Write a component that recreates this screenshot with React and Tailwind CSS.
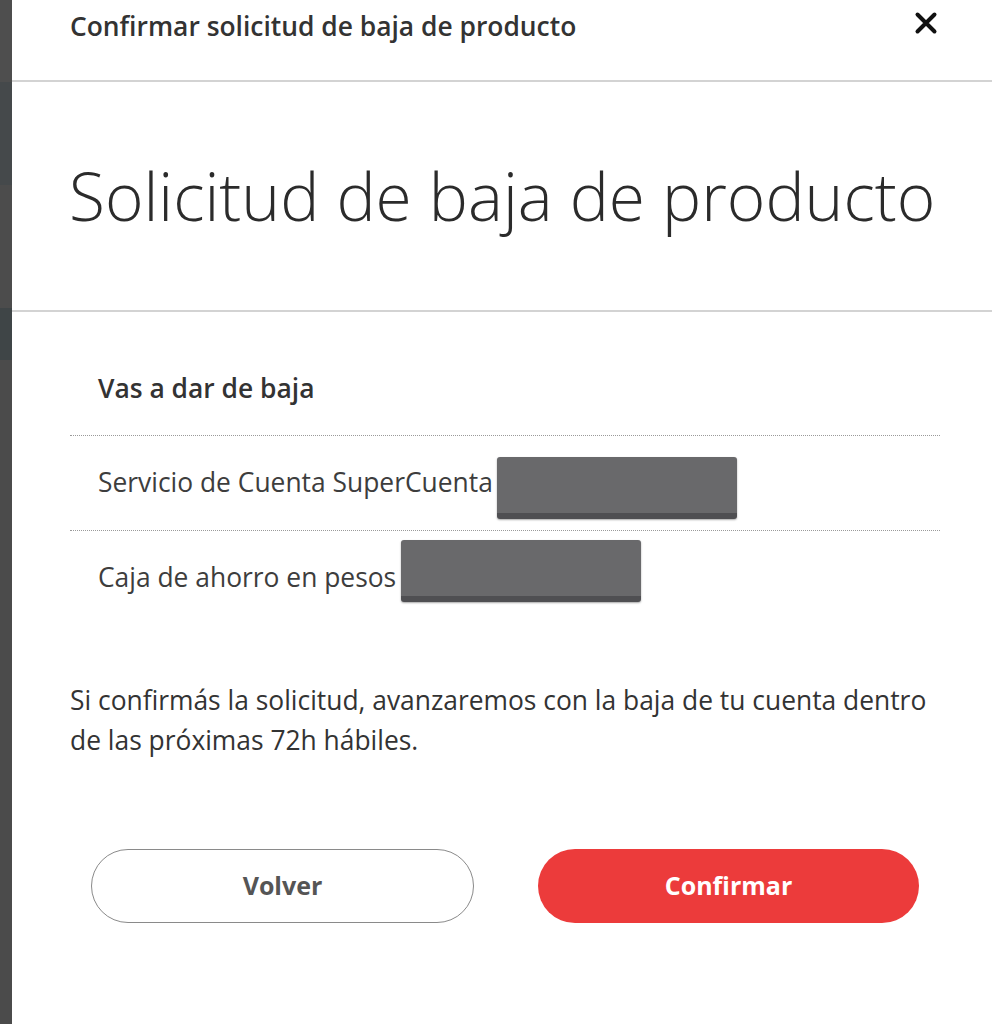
function CloseIcon() {
    return (
        <svg width="24" height="24" viewBox="0 0 24 24" fill="none">
            <path d="M3.5 3.5L20.5 20.5M20.5 3.5L3.5 20.5" stroke="#111" strokeWidth="4" strokeLinecap="round" />
        </svg>
    );
}

function Redacted({ className }) {
    return (
        <div className={`w-[240px] h-[62px] shrink-0 rounded-[3px] bg-[#69696b] border-b-[6px] border-[#4f4f52] shadow-[0_1px_2px_rgba(0,0,0,0.35)] ${className}`}></div>
    );
}

function App() {
    return (
        <div className="flex min-h-[1024px] w-[992px] bg-white font-['Open_Sans',sans-serif]">
            {/* dark page behind the modal */}
            <div className="w-[12px] shrink-0 flex flex-col">
                <div className="h-[82px] bg-[#4e4e4e]"></div>
                <div className="h-[103px] bg-[#45494b]"></div>
                <div className="h-[123px] bg-[#4c4c4c]"></div>
                <div className="h-[52px] bg-[#3f4547]"></div>
                <div className="flex-1 bg-[#4b4b4b]"></div>
            </div>

            <div className="flex-1 flex flex-col bg-white">
                <div className="h-[82px] flex items-start justify-between pl-[58px] pr-[54px] pt-[9px] border-b-2 border-[#d3d3d3]">
                    <div className="text-[26.4px] leading-[34px] font-semibold text-[#333]">
                        Confirmar solicitud de baja de producto
                    </div>
                    <button className="mt-[2px]">
                        <CloseIcon />
                    </button>
                </div>

                <div className="h-[230px] flex items-center pl-[57px] border-b-2 border-[#d3d3d3]">
                    <h1 className="text-[65.8px] font-light text-[#2b2b2b]">
                        Solicitud de baja de producto
                    </h1>
                </div>

                <div className="pl-[58px] pr-[52px] pt-[30px]">
                    <div className="h-[94px] flex items-center pl-[28px] border-b border-dotted border-[#9a9a9a]">
                        <span className="text-[26.4px] font-semibold text-[#333]">Vas a dar de baja</span>
                    </div>
                    <div className="h-[95px] flex items-center pl-[28px] border-b border-dotted border-[#9a9a9a]">
                        <span className="text-[26.4px] text-[#3d3d3d]">Servicio de Cuenta SuperCuenta</span>
                        <Redacted className="ml-[4px] mt-[10px]" />
                    </div>
                    <div className="h-[94px] flex items-center pl-[28px]">
                        <span className="text-[26.4px] text-[#3d3d3d]">Caja de ahorro en pesos</span>
                        <Redacted className="ml-[5px] -mt-[14px]" />
                    </div>

                    <p className="mt-[55px] text-[26.4px] leading-[40px] text-[#333]">
                        Si confirmás la solicitud, avanzaremos con la baja de tu cuenta dentro de las próximas 72h hábiles.
                    </p>

                    <div className="mt-[89px] flex gap-[64px] px-[21px]">
                        <button className="flex-1 h-[74px] rounded-full border border-[#8a8a8a] bg-white text-[25px] font-bold text-[#555]">
                            Volver
                        </button>
                        <button className="flex-1 h-[74px] rounded-full bg-[#ec3b3b] text-[25px] font-bold text-white">
                            Confirmar
                        </button>
                    </div>
                </div>
            </div>
        </div>
    );
}

export default App;
